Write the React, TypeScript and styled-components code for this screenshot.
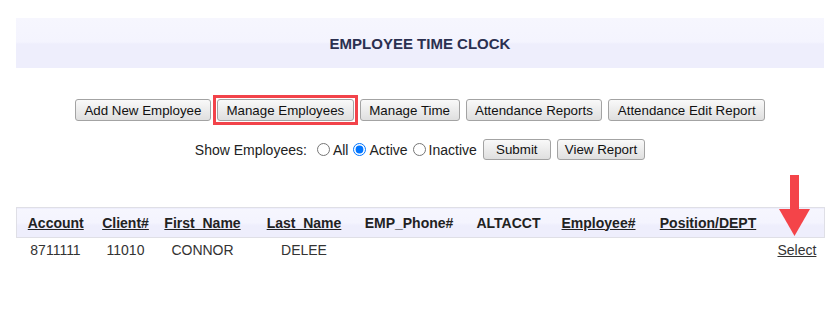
import React from "react";
import styled, { createGlobalStyle } from "styled-components";

const GlobalStyle = createGlobalStyle`
  body {
    margin: 0;
    background: #fff;
    font-family: "Liberation Sans", Arial, sans-serif;
    color: #222;
  }
`;

const Page = styled.div`
  position: relative;
  width: 808px;
  padding: 18px 0 0 16px;
`;

const TitleBar = styled.div`
  height: 50px;
  display: flex;
  align-items: center;
  justify-content: center;
  background: linear-gradient(#f6f6fe 0%, #f4f4fe 48%, #eeeefc 52%, #eeeefc 100%);
`;

const Title = styled.h1`
  margin: 0;
  font-size: 15px;
  font-weight: bold;
  color: #2b3050;
`;

const ButtonRow = styled.div`
  display: flex;
  justify-content: center;
  align-items: center;
  gap: 6px;
  margin-top: 31px;
`;

const Highlight = styled.span`
  display: flex;
  padding: 1px;
  margin: -4px;
  border: 3px solid #f2434a;
`;

const FilterRow = styled.div`
  display: flex;
  justify-content: center;
  align-items: center;
  margin-top: 18px;
  font-size: 14px;
  color: #222;
`;

const Label = styled.span`
  margin-right: 5px;
`;

const RadioLabel = styled.label`
  display: inline-flex;
  align-items: center;

  input {
    margin: 0 3px 0 5px;
    width: 13px;
    height: 13px;
  }
`;

const Button = styled.button<{ $width?: number }>`
  height: 22px;
  width: ${p => (p.$width ? `${p.$width}px` : "auto")};
  padding: 0 8.5px;
  font-family: "Liberation Sans", Arial, sans-serif;
  font-size: 13.33px;
  color: #111;
  background: linear-gradient(#f9f9f9, #dfdfdf);
  border: 1px solid #a3a3a3;
  border-radius: 3px;
`;

const SmallButton = styled(Button)`
  height: 21px;
  margin-left: 6px;
  padding: 0 7px;
`;

const Table = styled.table`
  margin-top: 47px;
  width: 808px;
  border-collapse: collapse;
  table-layout: fixed;
  font-size: 14px;
`;

const HeadRow = styled.tr`
  background: linear-gradient(#f6f6fe 0%, #f4f4fe 48%, #eeeefc 60%, #eeeefc 100%);
  border: 1px solid #dfdfe6;
`;

const Th = styled.th<{ $link?: boolean }>`
  height: 29px;
  padding: 0;
  text-align: center;
  font-weight: bold;
  color: #222;
  text-decoration: ${p => (p.$link ? "underline" : "none")};
`;

const Td = styled.td<{ $right?: boolean }>`
  height: 24px;
  padding: 0 ${p => (p.$right ? "9px" : "0")} 0 0;
  text-align: ${p => (p.$right ? "right" : "center")};
  color: #333;
`;

const SelectLink = styled.a`
  color: #333;
  text-decoration: underline;
`;

const Arrow = styled.svg`
  position: absolute;
  left: 779px;
  top: 175px;
`;

const columns = [
  { w: 78, label: "Account", link: true },
  { w: 62, label: "Client#", link: true },
  { w: 92, label: "First_Name", link: true },
  { w: 111, label: "Last_Name", link: true },
  { w: 99, label: "EMP_Phone#", link: false },
  { w: 100, label: "ALTACCT", link: false },
  { w: 80, label: "Employee#", link: true },
  { w: 139, label: "Position/DEPT", link: true },
  { w: 47, label: "", link: false },
];

const row = ["8711111", "11010", "CONNOR", "DELEE", "", "", "", ""];

const App = () => (
  <>
    <GlobalStyle />
    <Page>
      <TitleBar>
        <Title>EMPLOYEE TIME CLOCK</Title>
      </TitleBar>

      <ButtonRow>
        <Button>Add New Employee</Button>
        <Highlight>
          <Button>Manage Employees</Button>
        </Highlight>
        <Button>Manage Time</Button>
        <Button>Attendance Reports</Button>
        <Button>Attendance Edit Report</Button>
      </ButtonRow>

      <FilterRow>
        <Label>Show Employees:</Label>
        <RadioLabel>
          <input type="radio" name="show" />All
        </RadioLabel>
        <RadioLabel>
          <input type="radio" name="show" defaultChecked />Active
        </RadioLabel>
        <RadioLabel>
          <input type="radio" name="show" />Inactive
        </RadioLabel>
        <SmallButton $width={68}>Submit</SmallButton>
        <SmallButton>View Report</SmallButton>
      </FilterRow>

      <Table>
        <colgroup>
          {columns.map((c, i) => (
            <col key={i} style={{ width: c.w }} />
          ))}
        </colgroup>
        <thead>
          <HeadRow>
            {columns.map((c, i) => (
              <Th key={i} $link={c.link}>
                {c.label}
              </Th>
            ))}
          </HeadRow>
        </thead>
        <tbody>
          <tr>
            {row.map((v, i) => (
              <Td key={i}>{v}</Td>
            ))}
            <Td $right>
              <SelectLink href="#">Select</SelectLink>
            </Td>
          </tr>
        </tbody>
      </Table>

      <Arrow width="31" height="61" viewBox="0 0 31 61">
        <rect x="11" y="0" width="9" height="35" fill="#f44449" />
        <polygon points="0,34 31,34 15.5,61" fill="#f44449" />
      </Arrow>
    </Page>
  </>
);

export default App;
